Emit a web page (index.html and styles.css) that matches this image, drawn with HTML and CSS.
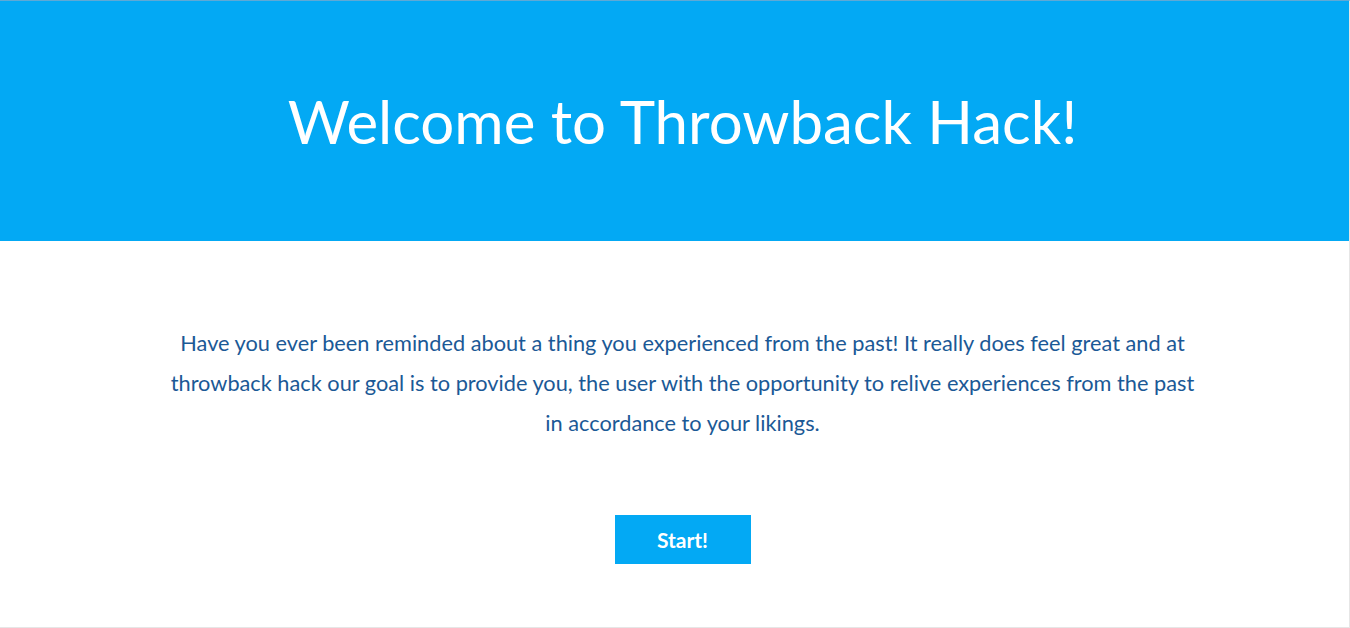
FILE: index.html
```html
<!DOCTYPE html>
<html>
<head>
<meta charset="utf-8">
<link rel="stylesheet" href="styles.css">
</head>
<body>
<div class="frame">
  <header class="hero">
    <h1 class="hero-title">Welcome to Throwback Hack!</h1>
  </header>
  <main class="content">
    <p class="intro">Have you ever been reminded about a thing you experienced from the past! It really does feel great and at throwback hack our goal is to provide you, the user with the opportunity to relive experiences from the past in accordance to your likings.</p>
    <button class="start-btn">Start!</button>
  </main>
</div>
</body>
</html>
```
FILE: styles.css
```css
html, body {
  margin: 0;
  padding: 0;
  background: #fff;
}
body {
  font-family: Lato, "Open Sans", sans-serif;
}
.frame {
  height: 626px;
  width: 1349px;
  border-top: 1px solid #5fa9d5;
  border-right: 1px solid #e6e6e6;
  border-bottom: 1px solid #e6e6e6;
  box-sizing: content-box;
  display: flex;
  flex-direction: column;
}
.hero {
  height: 240px;
  background: #03a9f4;
  display: flex;
  align-items: center;
  justify-content: center;
  padding-left: 16px;
}
.hero-title {
  margin: 0;
  color: #fff;
  font-weight: 400;
  font-size: 60px;
  line-height: 1;
}
.content {
  display: flex;
  flex-direction: column;
  align-items: center;
  padding-left: 16px;
  padding-top: 82px;
}
.intro {
  margin: 0;
  max-width: 1036px;
  text-align: center;
  color: #1b5996;
  font-size: 21.75px;
  line-height: 40px;
}
.start-btn {
  margin-top: 72px;
  width: 136px;
  height: 49px;
  border: none;
  background: #03a9f4;
  color: #fff;
  font-family: Lato, sans-serif;
  font-weight: 700;
  font-size: 21px;
}
```
